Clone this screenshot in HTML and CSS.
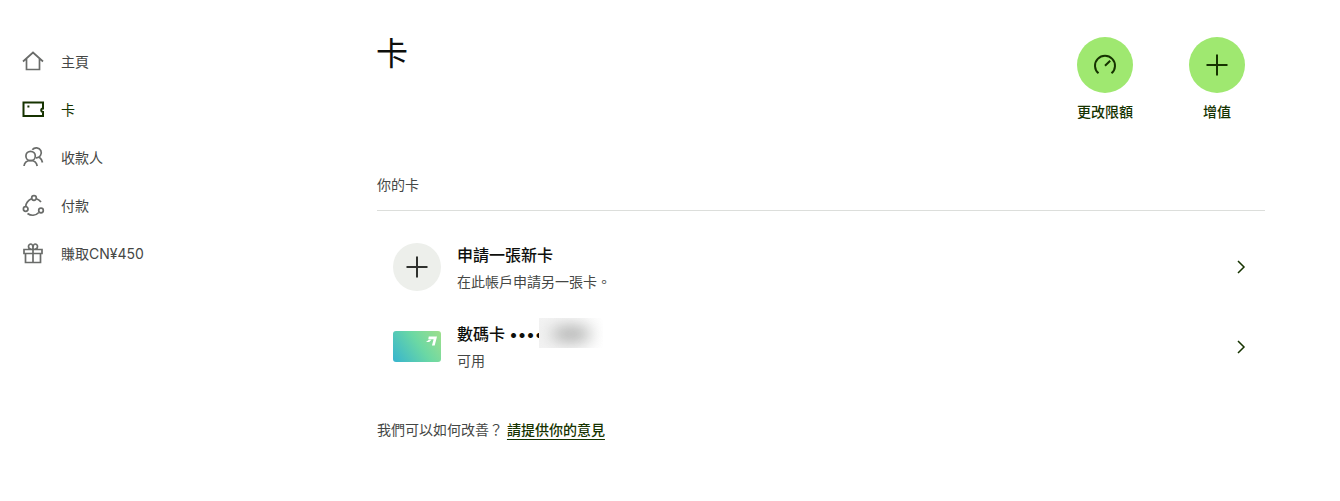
FILE: index.html
```html
<!DOCTYPE html>
<html lang="zh-Hant">
<head>
    <meta charset="utf-8">
    <title>卡</title>
    <link rel="stylesheet" href="styles.css">
</head>
<body>
    <div class="layout">
        <nav class="sidebar">
            <a class="nav-item">
                <svg class="nav-icon" viewBox="0 0 24 24"><path d="M2 11.500 12 2.500l10 9M5.500 9v10.500h13V9"/></svg>
                <span>主頁</span>
            </a>
            <a class="nav-item active">
                <svg class="nav-icon" viewBox="0 0 24 24"><path d="M2.500 4.500h19.500v6a1.800 1.800 0 0 0 0 3.600v3.900H2.500z"/><path class="dot" d="M6.400 8.500h2"/></svg>
                <span>卡</span>
            </a>
            <a class="nav-item">
                <svg class="nav-icon" viewBox="0 0 24 24"><circle cx="9.600" cy="10" r="4.700"/><path d="M3 20c.5-3.500 3-5.500 6.600-5.500s6 2 6.600 5.500M11.300 3.800A5 5 0 1 1 15 11.800M18.500 11.500c1.500 1 2.500 2.800 3 5"/></svg>
                <span>收款人</span>
            </a>
            <a class="nav-item">
                <svg class="nav-icon" viewBox="0 0 24 24"><circle cx="13" cy="4" r="2.300"/><circle cx="4.700" cy="15" r="2.300"/><circle cx="20" cy="16.500" r="2.300"/><path d="M10.500 4.800C7.300 6.300 5 9 4.700 12.500M15.500 4.800c2 .7 3.500 1.900 4.500 3.200M6.500 19.500c3.500 2.500 8 2.500 11.300-1"/></svg>
                <span>付款</span>
            </a>
            <a class="nav-item">
                <svg class="nav-icon" viewBox="0 0 24 24"><path d="M3 7.500h18v4H3zM4.500 11.500v9h15v-9M12 7.500v13M12 7.500C9.500 7.500 7.500 6.500 7.500 4.500 7.500 3.200 8.500 2 10 2c1.500 0 2 2.500 2 5.500zM12 7.500c2.500 0 4.500-1 4.500-3C16.500 3.200 15.500 2 14 2c-1.500 0-2 2.500-2 5.500z"/></svg>
                <span>賺取CN¥450</span>
            </a>
        </nav>

        <main class="content">
            <header class="page-header">
                <h1>卡</h1>
                <div class="actions">
                    <button class="action">
                        <span class="action-circle">
                            <svg viewBox="0 0 24 24"><path d="M5.500 20.300a10 10 0 1 1 13 0M12 12.700l5.200-5"/></svg>
                        </span>
                        <span class="action-label">更改限額</span>
                    </button>
                    <button class="action">
                        <span class="action-circle">
                            <svg viewBox="0 0 24 24"><path d="M12 1.500v21M1.500 12h21"/></svg>
                        </span>
                        <span class="action-label">增值</span>
                    </button>
                </div>
            </header>

            <h2 class="section-title">你的卡</h2>

            <ul class="card-list">
                <li class="card-row">
                    <span class="add-circle">
                        <svg viewBox="0 0 24 24"><path d="M12 1.500v21M1.500 12h21"/></svg>
                    </span>
                    <div class="row-text">
                        <div class="row-title">申請一張新卡</div>
                        <div class="row-sub">在此帳戶申請另一張卡。</div>
                    </div>
                    <svg class="chevron" viewBox="0 0 16 16"><path d="m5 2 6 6-6 6"/></svg>
                </li>
                <li class="card-row">
                    <span class="card-thumb">
                        <svg viewBox="0 0 12 10"><path d="M3 0h9L9.500 10H6.500l1.800-7H2.500zM3.200 3.500H6L3.500 6H0z"/></svg>
                    </span>
                    <div class="row-text">
                        <div class="row-title">數碼卡 ••••<span class="masked"><i></i></span></div>
                        <div class="row-sub">可用</div>
                    </div>
                    <svg class="chevron" viewBox="0 0 16 16"><path d="m5 2 6 6-6 6"/></svg>
                </li>
            </ul>

            <p class="feedback">我們可以如何改善？ <a>請提供你的意見</a></p>
        </main>
    </div>
</body>
</html>
```

FILE: styles.css
```css
:root {
    --forest: #163300;
    --lime: #9fe870;
    --ink: #0e0f0c;
    --muted: #454745;
}

html {
    font-family: "Inter", "Noto Sans CJK TC", sans-serif;
}

body {
    margin: 0;
    background: white;
    color: var(--muted);
    font-size: 14px;
    overflow: hidden;
}

.layout {
    display: flex;
    height: 501px;
}

.sidebar {
    width: 377px;
    flex: none;
    box-sizing: border-box;
    padding: 37px 0 0 21px;
}

.nav-item {
    display: flex;
    align-items: center;
    gap: 16px;
    height: 48px;
    color: var(--muted);
}

.nav-item.active {
    color: var(--forest);
}

.nav-icon {
    width: 24px;
    height: 24px;
    margin-top: 2px;
    fill: none;
    stroke: #6a6c6a;
    stroke-width: 1.700;
}

.nav-item.active .nav-icon {
    stroke: var(--forest);
    stroke-width: 2;
}

.content {
    width: 888px;
    flex: none;
}

.page-header {
    display: flex;
    justify-content: space-between;
    align-items: flex-start;
    padding-top: 37px;
}

h1 {
    margin: 0 0 0 -1px;
    color: var(--ink);
    font-size: 32px;
    font-weight: 400;
    line-height: 34px;
}

.actions {
    display: flex;
    gap: 56px;
    padding-right: 20px;
}

.action {
    display: flex;
    flex-direction: column;
    align-items: center;
    width: 56px;
    padding: 0;
    border: none;
    background: none;
    font: inherit;
    cursor: pointer;
}

.action-circle {
    display: flex;
    align-items: center;
    justify-content: center;
    width: 56px;
    height: 56px;
    border-radius: 50%;
    background: var(--lime);
}

.action-circle svg {
    width: 24px;
    height: 24px;
    fill: none;
    stroke: var(--forest);
    stroke-width: 2;
}

.action-label {
    margin-top: 9px;
    color: var(--forest);
    font-size: 14px;
    font-weight: 500;
    line-height: 20px;
    white-space: nowrap;
}

.section-title {
    margin: 52px 0 0;
    padding-bottom: 14px;
    border-bottom: 1px solid #dcdedb;
    font-size: 14px;
    font-weight: 400;
    line-height: 22px;
}

.card-list {
    margin: 16px 0 0;
    padding: 0;
    list-style: none;
}

.card-row {
    display: flex;
    align-items: center;
    gap: 16px;
    padding: 16px;
}

.add-circle {
    display: flex;
    align-items: center;
    justify-content: center;
    width: 48px;
    height: 48px;
    flex: none;
    border-radius: 50%;
    background: #edefeb;
}

.add-circle svg {
    width: 24px;
    height: 24px;
    fill: none;
    stroke: #2f312e;
    stroke-width: 2;
}

.card-thumb {
    position: relative;
    width: 48px;
    height: 31px;
    flex: none;
    border-radius: 3px;
    background: linear-gradient(55deg, #36b4cf 0%, #6bd8a4 55%, #9fdf8c 100%);
}

.card-thumb svg {
    position: absolute;
    top: 5px;
    right: 4px;
    width: 11px;
    height: 10px;
    fill: white;
}

.row-text {
    flex: 1;
    min-width: 0;
}

.row-title {
    position: relative;
    color: var(--ink);
    font-size: 16px;
    font-weight: 500;
    line-height: 22px;
}

.row-sub {
    margin-top: 6px;
    font-size: 14px;
    line-height: 19px;
}

/* blurred out card digits */
.masked {
    position: absolute;
    top: -5px;
    left: 82px;
    width: 64px;
    height: 30px;
    overflow: hidden;
    background: linear-gradient(to right, #f2f2f2, #f8f8f8 60%, white);
}

.masked i {
    position: absolute;
    inset: 9px 12px 7px 12px;
    background: #a3a4a3;
    border-radius: 50%;
    filter: blur(8px);
}

.chevron {
    width: 16px;
    height: 16px;
    flex: none;
    fill: none;
    stroke: var(--forest);
    stroke-width: 1.500;
}

.feedback {
    margin: 33px 0 0;
    font-size: 14px;
    line-height: 22px;
}

.feedback a {
    color: var(--forest);
    font-weight: 500;
    text-decoration: underline;
    text-underline-offset: 4px;
}
```
